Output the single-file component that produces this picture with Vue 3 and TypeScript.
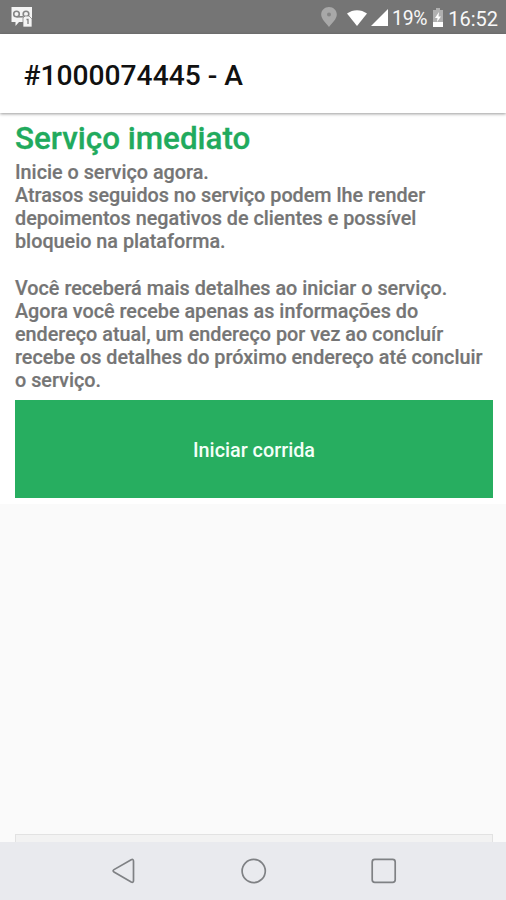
<script setup lang="ts">
const firstNotice: string[] = [
  'Inicie o serviço agora.',
  'Atrasos seguidos no serviço podem lhe render',
  'depoimentos negativos de clientes e possível',
  'bloqueio na plataforma.',
]
const secondNotice: string[] = [
  'Você receberá mais detalhes ao iniciar o serviço.',
  'Agora você recebe apenas as informações do',
  'endereço atual, um endereço por vez ao concluír',
  'recebe os detalhes do próximo endereço até concluir',
  'o serviço.',
]
</script>

<template>
  <div class="screen">
    <header class="status">
      <svg class="notification" viewBox="0 0 22 20" width="22" height="20">
        <path d="M.5 0H21V18H12V15H8L4.5 19V15H.5Z" fill="#f4f4f4" />
        <g fill="none" stroke="#858585" stroke-width="1.6"><circle cx="5.5" cy="7" r="2.8" /><circle cx="15" cy="7" r="2.8" /><path d="M5.5 9.8H12" /></g>
        <path d="M14 9H18L21 12V20H12V11Z" fill="#f4f4f4" stroke="#757575" stroke-width=".7" />
        <path d="M15.5 12.5H17V17" fill="none" stroke="#808080" stroke-width="1.3" />
      </svg>
      <div class="indicators">
        <svg class="pin" viewBox="0 0 16 20" width="16" height="20"><path d="M8 0C3.6 0 .2 3.3.2 7.5.2 12 5 16 8 20 11 16 15.8 12 15.8 7.5 15.8 3.3 12.4 0 8 0Z" fill="#a8a8a8" /><circle cx="8" cy="7.6" r="2" fill="#858585" /></svg>
        <svg class="wifi" viewBox="0 0 20 16" width="20" height="16"><path d="M0 3.5C6-1 14-1 20 3.5L10 16Z" fill="#fff" /></svg>
        <svg class="signal" viewBox="0 0 17 17" width="17" height="17"><path d="M17 0V17H0Z" fill="#fff" /></svg>
        <span class="status-text percent">19%</span>
        <svg class="battery" viewBox="0 0 10 19" width="10" height="19"><path d="M3 0H7V2H10V14H0V2H3Z" fill="#b0b0b0" /><path d="M0 14H10V19H0Z" fill="#fff" /><path d="M6 4 2 10H4.5L4 14 8 8.5H5.5Z" fill="#fff" /></svg>
        <span class="status-text clock">16:52</span>
      </div>
    </header>
    <div class="toolbar"><h1 class="order">#1000074445 - A</h1></div>
    <main class="content">
      <section class="service">
        <h2 class="title">Serviço imediato</h2>
        <p class="notice"><span v-for="line in firstNotice" :key="line">{{ line }}</span></p>
        <p class="notice"><span v-for="line in secondNotice" :key="line">{{ line }}</span></p>
        <button class="start" type="button">Iniciar corrida</button>
      </section>
      <div class="next-card"></div>
    </main>
    <nav class="navigation">
      <svg viewBox="0 0 26 26" width="26" height="26"><path d="M20.2 1.7 3 11.6Q1.2 12.8 3 14.1L20.2 24Q22.5 25 22.5 22.5V3.2Q22.5.8 20.2 1.7Z" /></svg>
      <svg viewBox="0 0 26 26" width="26" height="26"><circle cx="12.7" cy="13" r="11.6" /></svg>
      <svg viewBox="0 0 26 26" width="26" height="26"><rect x="1.2" y="1.4" width="23" height="23" rx="2.6" /></svg>
    </nav>
  </div>
</template>

<style>
body { margin: 0; }
</style>
<style scoped>
.screen { width: 506px; height: 900px; display: flex; flex-direction: column; overflow: hidden; background: #fafafa; font-family: Roboto, sans-serif; }
.status { height: 34px; background: #757575; display: flex; justify-content: space-between; box-sizing: border-box; padding: 7px 8px 0 11px; color: #f8f8f8; }
.indicators { display: flex; align-items: flex-start; }
.wifi { margin: 3px 0 0 10px; }
.signal { margin: 2px 0 0 4px; }
.status-text { font-size: 20px; line-height: 24px; }
.percent { margin: 0 6px 0 4px; font-size: 19.4px; letter-spacing: -.3px; }
.battery { margin-top: 1px; }
.clock { margin: 0 0 0 5px; }
.toolbar { height: 79px; box-sizing: border-box; padding-left: 23.5px; display: flex; align-items: center; background: #fff; box-shadow: 0 1px 3px rgba(0,0,0,.4); position: relative; }
.order { margin: 4px 0 0; font-size: 28.2px; font-weight: 500; line-height: 32px; color: #111; }
.content { flex: 1; display: flex; flex-direction: column; }
.service { background: #fff; padding: 9px 13px 6px 15px; }
.title { margin: 0 0 4.6px; font-size: 31.4px; line-height: 34px; font-weight: 500; color: #21aa5d; -webkit-text-stroke: .3px #21aa5d; }
.notice { margin: 0 0 23.2px; display: flex; flex-direction: column; color: #757575; font-size: 19.8px; font-weight: 500; line-height: 23.2px; white-space: nowrap; -webkit-text-stroke: .2px #757575; }
.notice + .notice { margin-bottom: 7.4px; }
.start { display: block; width: 100%; height: 98px; padding: 2.6px 0 0; border: 0; background: #27ae60; color: #f4fff8; font: 500 19.8px Roboto, sans-serif; }
.next-card { margin: auto 13px 0 15px; height: 8px; box-sizing: border-box; background: #f2f2f2; border: 1px solid #e2e2e2; border-bottom: 0; }
.navigation { height: 58px; padding-left: 2px; background: #e9eaee; display: flex; justify-content: center; align-items: center; gap: 104px; }
.navigation svg { fill: none; stroke: #7f8184; stroke-width: 1.7; }
</style>
